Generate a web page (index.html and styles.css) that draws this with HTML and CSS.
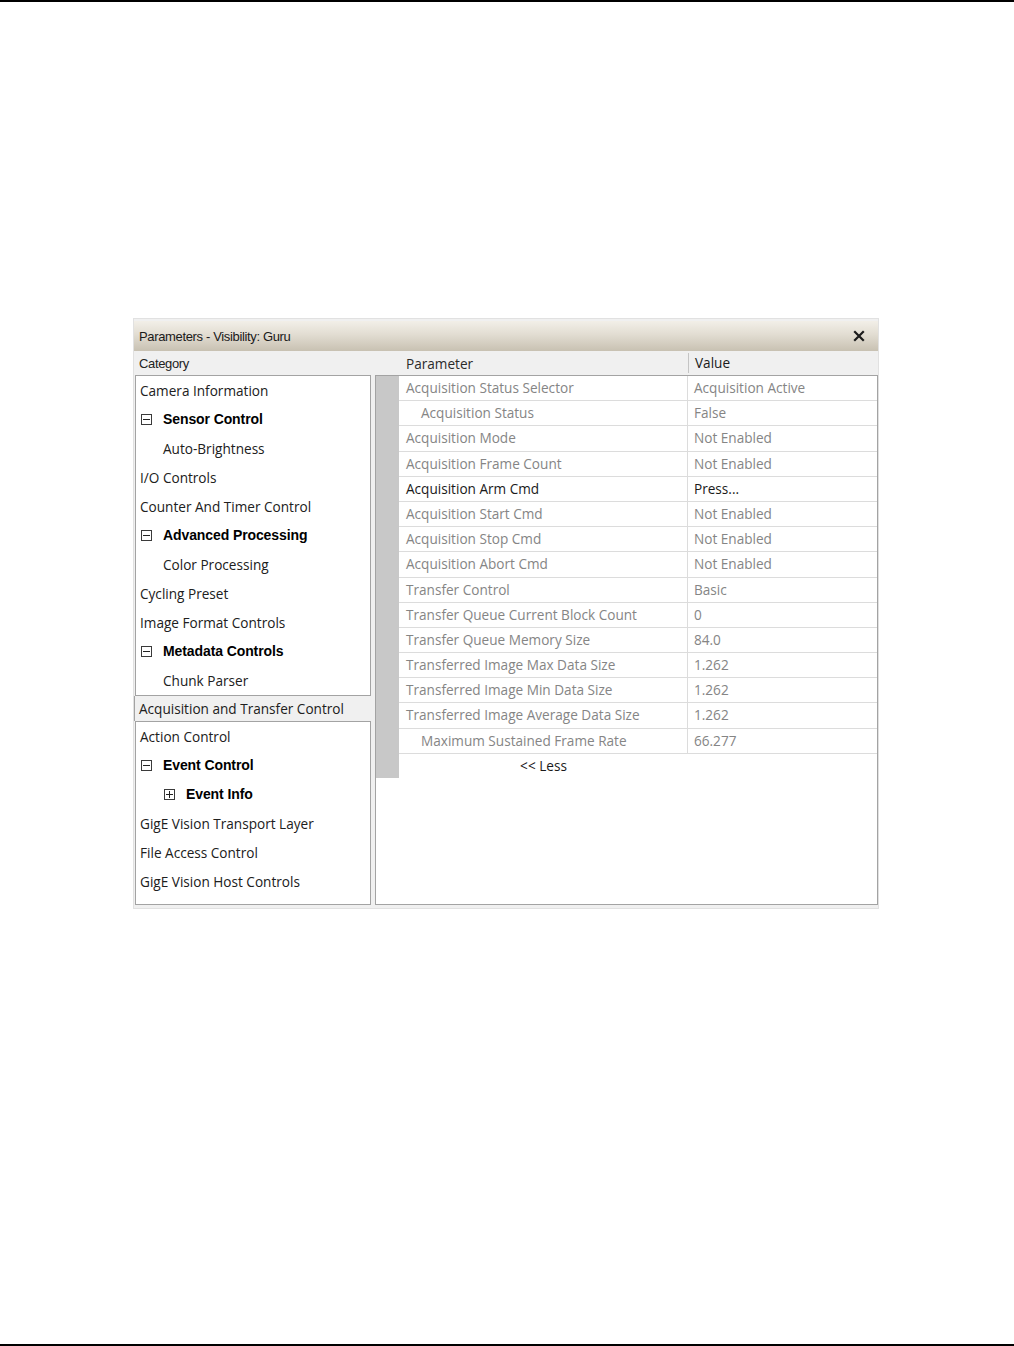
FILE: index.html
```html
<!DOCTYPE html>
<html lang="en">
<head>
	<meta charset="UTF-8">
	<title>Parameters - Visibility: Guru</title>
	<link rel="stylesheet" href="styles.css">
</head>
<body>

<div class="page">
	<div class="rule"></div>

	<div class="win">
		<div class="win_title">
			<span class="win_name">Parameters - Visibility: Guru</span>
			<svg class="win_cls" width="12" height="12" viewBox="0 0 12 12"><path d="M2 2L10 10M10 2L2 10" stroke="#1b1b1b" stroke-width="2.2" stroke-linecap="square"/></svg>
		</div>

		<div class="win_hd">
			<span class="hd_cat">Category</span>
			<span class="hd_gut"></span>
			<span class="hd_param">Parameter</span>
			<span class="hd_val">Value</span>
		</div>

		<div class="win_bd">
			<!-- 类别 -->
			<div class="cats">
				<ul class="cat_box">
					<li>Camera Information</li>
					<li class="grp"><i class="tg"></i>Sensor Control</li>
					<li class="sub">Auto-Brightness</li>
					<li>I/O Controls</li>
					<li>Counter And Timer Control</li>
					<li class="grp"><i class="tg"></i>Advanced Processing</li>
					<li class="sub">Color Processing</li>
					<li>Cycling Preset</li>
					<li>Image Format Controls</li>
					<li class="grp"><i class="tg"></i>Metadata Controls</li>
					<li class="sub">Chunk Parser</li>
				</ul>
				<div class="cat_cur">Acquisition and Transfer Control</div>
				<ul class="cat_box cat_box2">
					<li>Action Control</li>
					<li class="grp"><i class="tg"></i>Event Control</li>
					<li class="grp grp2"><i class="tg plus"></i>Event Info</li>
					<li>GigE Vision Transport Layer</li>
					<li>File Access Control</li>
					<li>GigE Vision Host Controls</li>
				</ul>
			</div>

			<!-- 参数 -->
			<div class="props">
				<div class="grid">
					<div class="gutter"></div>
					<div class="tbl">
						<div class="row"><span class="p">Acquisition Status Selector</span><span class="v">Acquisition Active</span></div>
						<div class="row"><span class="p ind">Acquisition Status</span><span class="v">False</span></div>
						<div class="row"><span class="p">Acquisition Mode</span><span class="v">Not Enabled</span></div>
						<div class="row"><span class="p">Acquisition Frame Count</span><span class="v">Not Enabled</span></div>
						<div class="row on"><span class="p">Acquisition Arm Cmd</span><span class="v">Press...</span></div>
						<div class="row"><span class="p">Acquisition Start Cmd</span><span class="v">Not Enabled</span></div>
						<div class="row"><span class="p">Acquisition Stop Cmd</span><span class="v">Not Enabled</span></div>
						<div class="row"><span class="p">Acquisition Abort Cmd</span><span class="v">Not Enabled</span></div>
						<div class="row"><span class="p">Transfer Control</span><span class="v">Basic</span></div>
						<div class="row"><span class="p">Transfer Queue Current Block Count</span><span class="v">0</span></div>
						<div class="row"><span class="p">Transfer Queue Memory Size</span><span class="v">84.0</span></div>
						<div class="row"><span class="p">Transferred Image Max Data Size</span><span class="v">1.262</span></div>
						<div class="row"><span class="p">Transferred Image Min Data Size</span><span class="v">1.262</span></div>
						<div class="row"><span class="p">Transferred Image Average Data Size</span><span class="v">1.262</span></div>
						<div class="row"><span class="p ind">Maximum Sustained Frame Rate</span><span class="v">66.277</span></div>
						<div class="less">&lt;&lt; Less</div>
					</div>
				</div>
			</div>
		</div>
	</div>

	<div class="rule rule_btm"></div>
</div>

</body>
</html>
```

FILE: styles.css
```css
*{margin:0; padding:0;}
body{ background:#fff; font-family:"Open Sans","Noto Sans",sans-serif; font-size:13.6px; color:#1e1e1e;}
ul{ list-style:none; }

.page{ display:flex; flex-direction:column; height:1346px; }
.rule{ height:2px; background:#000; }
.rule_btm{ margin-top:auto; }

/*窗口*/
.win{ box-sizing:border-box; width:746px; margin:316px 0 0 133px; border:1px solid #e1e1e1; background:#f0f0f0; padding:2px 0 3px 0; }
.win_title{ display:flex; align-items:center; justify-content:space-between; height:30px; padding:0 13px 0 5px; background:linear-gradient(#f2efe8,#e2ddd2 45%,#c8c1b2); font-family:"Liberation Sans",Arial,sans-serif; font-size:13px; letter-spacing:-0.35px; color:#1a1a1a; }
.win_cls{ display:block; margin-top:-1px; }

/*表头*/
.win_hd{ display:flex; align-items:center; height:24px; }
.hd_cat{ width:241px; padding-left:5px; box-sizing:border-box; font-family:"Liberation Sans",Arial,sans-serif; font-size:13px; letter-spacing:-0.35px; color:#222; }
.hd_gut{ width:24px; }
.hd_param{ width:289px; padding-left:7px; box-sizing:border-box; color:#2a2a2a; }
.hd_val{ padding-left:6px; border-left:1px solid #c4c4c4; line-height:20px; color:#1a1a1a; }

.win_bd{ display:flex; gap:4px; padding-left:1px; }

/*类别列表*/
.cats{ width:236px; display:flex; flex-direction:column; }
.cat_box{ background:#fff; border:1px solid #a3a3a3; }
.cat_box li{ height:29px; line-height:29px; padding-left:4px; white-space:nowrap; color:#202020; }
.cat_box li.sub{ padding-left:27px; }
.cat_box li.grp{ display:flex; align-items:center; padding-left:5px; font-family:"Liberation Sans",Arial,sans-serif; font-size:14px; font-weight:bold; letter-spacing:-0.1px; color:#000; }
.cat_box li.grp2{ padding-left:28px; }
.cat_box2{ flex:1; padding-bottom:7px; }
.cat_cur{ width:240px; margin-left:-1px; height:25px; line-height:25px; padding-left:4px; box-sizing:border-box; border-left:1px solid #a3a3a3; white-space:nowrap; color:#202020; }

.tg{ position:relative; display:block; width:9px; height:9px; border:1px solid #3a3a3a; margin-right:11px; flex:none; }
.tg::before{ content:""; position:absolute; left:1px; top:4px; width:7px; height:1px; background:#222; }
.tg.plus::after{ content:""; position:absolute; left:4px; top:1px; width:1px; height:7px; background:#222; }

/*参数表*/
.props{ width:503px; height:530px; box-sizing:border-box; background:#fff; border:1px solid #a3a3a3; }
.grid{ display:flex; }
.gutter{ width:23px; background:#c8c8c8; }
.tbl{ flex:1; }
.row{ display:flex; height:24.2px; line-height:24px; border-bottom:1px solid #dcdcdc; color:#858585; white-space:nowrap; }
.row.on{ color:#1a1a1a; }
.p{ width:289px; padding-left:7px; box-sizing:border-box; border-right:1px solid #dcdcdc; }
.p.ind{ padding-left:22px; }
.v{ padding-left:6px; }
.less{ width:289px; height:24px; line-height:24px; text-align:center; color:#1a1a1a; }
```
